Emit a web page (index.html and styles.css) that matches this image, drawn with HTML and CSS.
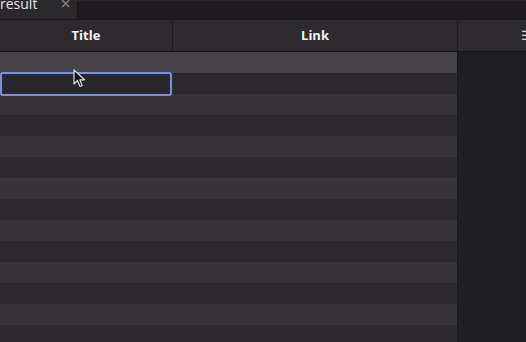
FILE: index.html
```html
<!DOCTYPE html>
<html lang="en">
  <head>
    <meta charset="utf-8" />
    <title>result</title>
    <link rel="stylesheet" href="styles.css">
  </head>
  <body>
    <div class="tabs">
      <div class="tab">
        <span class="tab-name">result</span>
        <span class="tab-close">×</span>
      </div>
      <div class="tab-rest"></div>
    </div>

    <div class="head">
      <div class="col col-title">Title</div>
      <div class="col col-link">Link</div>
      <div class="col col-menu"><span class="menu">☰</span></div>
    </div>

    <div class="grid">
      <div class="rows">
        <div class="row hover"></div>
        <div class="row editing"><div class="cell"><input class="edit" type="text" /></div></div>
        <div class="row"></div>
        <div class="row"></div>
        <div class="row"></div>
        <div class="row"></div>
        <div class="row"></div>
        <div class="row"></div>
        <div class="row"></div>
        <div class="row"></div>
        <div class="row"></div>
        <div class="row"></div>
        <div class="row"></div>
        <div class="row"></div>
      </div>
      <div class="side"></div>
    </div>

    <!-- mouse pointer captured in the shot -->
    <svg class="pointer" width="14" height="20" viewBox="0 0 14 20">
      <path d="M1 1 L1 15 L4.5 11.5 L7 17.5 L9.2 16.5 L6.8 10.8 L11.5 10.8 Z" fill="#111" stroke="#ddd" stroke-width="1.2" stroke-linejoin="round" />
    </svg>
  </body>
</html>
```

FILE: styles.css
```css
html {
  background-color: #1f1d20;
}

body {
  margin: 0;
  width: 526px;
  height: 342px;
  overflow: hidden;
  position: relative;
  font-family: "Open Sans", "Liberation Sans", sans-serif;
  -webkit-font-smoothing: antialiased;
  background-color: #1f1d20;
  color: #ffffff;
}

.tabs {
  display: flex;
  height: 19px;
  background-color: #252326;
}

.tab {
  width: 77px;
  display: flex;
  align-items: flex-end;
  background-color: #2a282b;
  padding-bottom: 9px;
  box-sizing: border-box;
}

.tab-name {
  font-size: 14px;
  line-height: 13px;
  color: #e6e6e6;
}

.tab-close {
  font-size: 18px;
  line-height: 13px;
  color: #8a888c;
  margin-left: 23px;
}

.tab-rest {
  flex: 1;
  background-color: #1e1c1e;
  border-left: 1px solid #151315;
  border-top: 1px solid #151315;
  margin-top: 2px;
}

.head {
  display: flex;
  height: 33px;
  background-color: #2c2a2e;
  border-top: 1px solid #1a181a;
  border-bottom: 1px solid #1a181a;
  box-sizing: border-box;
}

.col {
  display: flex;
  align-items: center;
  justify-content: center;
  font-size: 13px;
  font-weight: bold;
  color: #f2f2f2;
  border-right: 1px solid #1c1a1d;
  box-sizing: border-box;
  padding-bottom: 1px;
}

.col-title {
  width: 173px;
}

.col-link {
  width: 285px;
}

.col-menu {
  flex: 1;
  justify-content: flex-end;
  border-right: none;
  overflow: hidden;
}

.menu {
  font-size: 12px;
  font-weight: normal;
  color: #d0d0d0;
  margin-right: -6px;
}

.grid {
  display: flex;
  height: 290px;
}

.rows {
  width: 458px;
  border-right: 1px solid #19171a;
  box-sizing: border-box;
}

.row {
  height: 21px;
}

.row:nth-child(odd) {
  background-color: #363438;
}

.row:nth-child(even) {
  background-color: #2b292d;
}

.row.hover {
  background-color: #454347;
}

.cell {
  width: 173px;
  height: 21px;
  position: relative;
}

.edit {
  position: absolute;
  left: 0;
  top: -1px;
  width: 172px;
  height: 24px;
  margin: 0;
  box-sizing: border-box;
  background-color: #29272b;
  border: 2px solid #7d90e0;
  border-radius: 3px;
  outline: none;
}

.side {
  flex: 1;
  background-color: #1f1e20;
}

.pointer {
  position: absolute;
  left: 73px;
  top: 69px;
}
```
